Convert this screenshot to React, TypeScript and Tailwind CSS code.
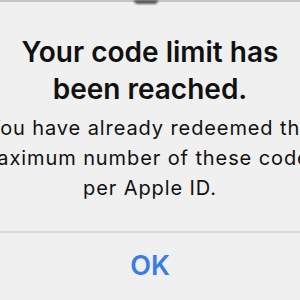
export default function App() {
  return (
    <div className="relative w-[300px] h-[300px] overflow-hidden bg-[#f0f0f0] font-['Inter',sans-serif] text-[#111]">
      <div className="h-[2px] bg-[#c4c4c4]" />
      <span className="absolute left-[134px] top-0 h-[4px] w-[24px] rounded-b-full bg-[#555] blur-[1px]" />

      <div className="flex flex-col items-center">
        <h1 className="mt-[32px] text-center text-[28px] leading-[37px] font-semibold whitespace-nowrap">
          Your code limit has
          <br />
          been reached.
        </h1>
        <p className="mt-[5px] text-center text-[20px] leading-[30px] tracking-[0.9px] whitespace-nowrap">
          You have already redeemed the
          <br />
          maximum number of these codes
          <br />
          per Apple ID.
        </p>
      </div>

      <div className="mt-[28px] h-[2px] bg-[#d9d9d9]" />

      <div className="flex justify-center pt-[16px]">
        <button className="text-[27px] leading-[34px] font-semibold text-[#3a7de8]">OK</button>
      </div>
    </div>
  );
}
